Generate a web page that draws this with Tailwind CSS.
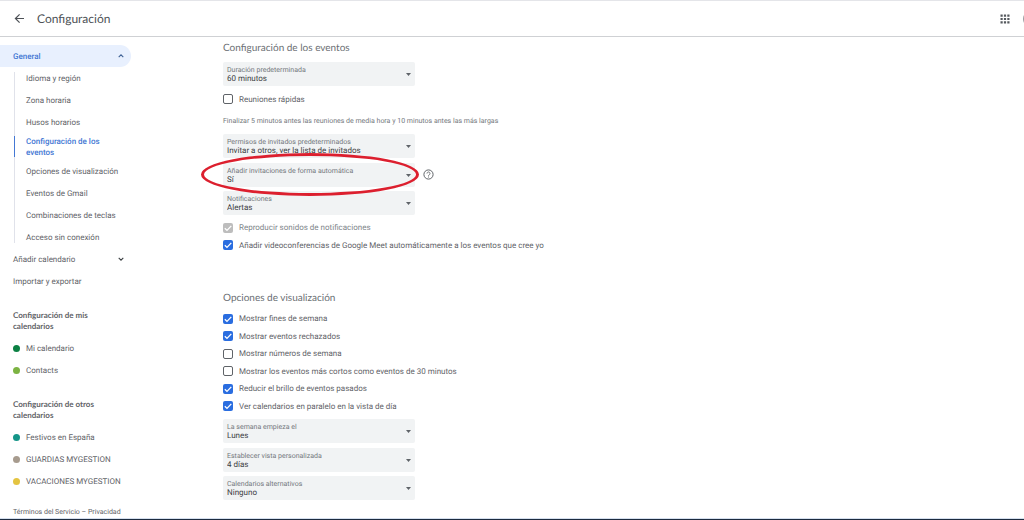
<!DOCTYPE html>
<html lang='es'>

<head>
    <meta charset='UTF-8'>
    <meta name='viewport' content='width=device-width, initial-scale=1.0'>
    <title>Configuración</title>
    <script src="https://cdn.jsdelivr.net/npm/@tailwindcss/browser@4"></script>
</head>

<body class='min-h-screen flex flex-col overflow-x-hidden bg-white font-[Roboto,"Liberation_Sans",sans-serif] text-[8px] leading-[11px] text-[#5f6368] [&_*]:[text-rendering:geometricPrecision]'>

    <header class='flex items-center h-[37px] border-t border-t-[#e4e5e9] border-b border-b-[#cfd1d4] pl-[14px] overflow-hidden'>
        <button aria-label='Atrás' class='mr-3'>
            <svg class='size-[11px]' viewBox='0 0 11 11' fill='none' stroke='#4d5156' stroke-width='1.2'><path d='M10 5.5H1.5M5.6 1.3 1.4 5.5l4.2 4.2' /></svg>
        </button>
        <h1 class='font-[Lato,sans-serif] text-[12px] leading-4 text-[#4d5156]'>Configuración</h1>
        <button aria-label='Aplicaciones' class='ml-auto mr-[13px]'>
            <svg class='size-[10px]' viewBox='0 0 10 10' fill='#55595e'><path d='M.5.5h2.2v2.2H.5zM3.9.5h2.2v2.2H3.9zM7.3.5h2.2v2.2H7.3zM.5 3.9h2.2v2.2H.5zM3.9 3.9h2.2v2.2H3.9zM7.3 3.9h2.2v2.2H7.3zM.5 7.3h2.2v2.2H.5zM3.9 7.3h2.2v2.2H3.9zM7.3 7.3h2.2v2.2H7.3z' /></svg>
        </button>
        <button aria-label='Cuenta' class='size-4 rounded-full bg-[#9a9da1] shrink-0 -mr-[15px]'></button>
    </header>

    <div class='flex flex-1'>

        <!-- sidebar -->
        <nav class='w-[131px] shrink-0 pt-2'>
            <button class='flex items-center justify-between w-full h-[22px] rounded-r-full bg-[#e8f0fe] pl-[13px] pr-[7px] font-medium text-[#4478d4]' aria-expanded='true'>
                General
                <svg class='size-[6px]' viewBox='0 0 6 6' fill='none' stroke='#3f6296' stroke-width='1.1'><path d='M.7 4.2 3 1.9l2.3 2.3' /></svg>
            </button>

            <div class='relative'>
                <div class='absolute left-[14px] top-[5px] bottom-[5px] w-px bg-[#e0e2ea]'></div>
                <a href='#' class='flex items-center h-[22px] pl-[26px]'>Idioma y región</a>
                <a href='#' class='flex items-center h-[22px] pl-[26px]'>Zona horaria</a>
                <a href='#' class='flex items-center h-[22px] pl-[26px]'>Husos horarios</a>
                <a href='#' class='relative flex items-center h-[27px] pl-[26px] pr-6 font-medium text-[#4478d4]'>
                    <span class='absolute left-[14px] inset-y-[3px] w-px bg-[#4478d4]'></span>
                    Configuración de los eventos
                </a>
                <a href='#' class='flex items-center h-[22px] pl-[26px]'>Opciones de visualización</a>
                <a href='#' class='flex items-center h-[22px] pl-[26px]'>Eventos de Gmail</a>
                <a href='#' class='flex items-center h-[22px] pl-[26px]'>Combinaciones de teclas</a>
                <a href='#' class='flex items-center h-[22px] pl-[26px]'>Acceso sin conexión</a>
            </div>

            <button class='flex items-center justify-between w-full h-[22px] pl-[13px] pr-[7px]' aria-expanded='false'>
                Añadir calendario
                <svg class='size-[6px]' viewBox='0 0 6 6' fill='none' stroke='#3c4043' stroke-width='1.1'><path d='M.7 1.9 3 4.2l2.3-2.3' /></svg>
            </button>
            <a href='#' class='flex items-center h-[22px] pl-[13px]'>Importar y exportar</a>

            <h2 class='mt-[18px] mb-[5px] pl-[13px] pr-7 font-[Lato,sans-serif] font-bold text-[#5f6368]'>Configuración de mis calendarios</h2>
            <a href='#' class='flex items-center gap-[6px] h-[22px] pl-[13px]'><span class='size-[7px] rounded-full bg-[#0b8043]'></span>Mi calendario</a>
            <a href='#' class='flex items-center gap-[6px] h-[22px] pl-[13px]'><span class='size-[7px] rounded-full bg-[#7cb342]'></span>Contacts</a>

            <h2 class='mt-[18px] mb-[5px] pl-[13px] pr-7 font-[Lato,sans-serif] font-bold text-[#5f6368]'>Configuración de otros calendarios</h2>
            <a href='#' class='flex items-center gap-[6px] h-[22px] pl-[13px]'><span class='size-[7px] rounded-full bg-[#159588]'></span>Festivos en España</a>
            <a href='#' class='flex items-center gap-[6px] h-[22px] pl-[13px] whitespace-nowrap'><span class='size-[7px] rounded-full bg-[#a79b8e]'></span>GUARDIAS MYGESTION</a>
            <a href='#' class='flex items-center gap-[6px] h-[22px] pl-[13px] whitespace-nowrap'><span class='size-[7px] rounded-full bg-[#e4c441]'></span>VACACIONES MYGESTION</a>

            <p class='mt-[15px] pl-[13px] text-[7px] whitespace-nowrap'><a href='#'>Términos del Servicio</a> – <a href='#'>Privacidad</a></p>
        </nav>

        <!-- settings -->
        <main class='flex-1 pl-[92px] pt-[3px]'>
            <section>
                <h2 class='font-[Lato,sans-serif] text-[10px] leading-4 text-[#6b6f74]'>Configuración de los eventos</h2>

                <div class='relative mt-[6px] w-48 h-6 bg-[#f1f3f4] rounded-xs px-1 pt-1'>
                    <label for='duration' class='block text-[7px] leading-[8px] text-[#74787d]'>Duración predeterminada</label>
                    <select id='duration' class='block appearance-none w-full leading-[9px] text-[#3c4043]'><option>60 minutos</option></select>
                    <svg class='absolute right-1 top-[11px] w-[5px] h-[3px]' viewBox='0 0 5 3' fill='#5f6368'><path d='M0 0h5L2.500 3z' /></svg>
                </div>

                <label class='flex items-center gap-[6px] h-[18px] mt-1'>
                    <span class='grid size-[10px]'>
                        <input type='checkbox' class='appearance-none col-start-1 row-start-1 size-[10px] rounded-xs border border-[#5f6368]'>
                    </span>
                    Reuniones rápidas
                </label>

                <p class='mt-2 text-[7px] text-[#74787d]'>Finalizar 5 minutos antes las reuniones de media hora y 10 minutos antes las más largas</p>

                <div class='flex flex-col justify-between mt-[7px] h-[81px]'>
                    <div class='relative w-48 h-6 bg-[#f1f3f4] rounded-xs px-1 pt-1'>
                        <label for='guests' class='block text-[7px] leading-[8px] text-[#74787d]'>Permisos de invitados predeterminados</label>
                        <select id='guests' class='block appearance-none w-full leading-[9px] text-[#3c4043]'><option>Invitar a otros, ver la lista de invitados</option></select>
                        <svg class='absolute right-1 top-[11px] w-[5px] h-[3px]' viewBox='0 0 5 3' fill='#5f6368'><path d='M0 0h5L2.500 3z' /></svg>
                    </div>
                    <div class='flex items-center gap-2'>
                        <div class='relative w-48 h-6 bg-[#f1f3f4] rounded-xs px-1 pt-1'>
                            <label for='invites' class='block text-[7px] leading-[8px] text-[#74787d]'>Añadir invitaciones de forma automática</label>
                            <select id='invites' class='block appearance-none w-full leading-[9px] text-[#3c4043]'><option>Sí</option></select>
                            <svg class='absolute right-1 top-[11px] w-[5px] h-[3px]' viewBox='0 0 5 3' fill='#5f6368'><path d='M0 0h5L2.500 3z' /></svg>
                            <!-- highlight ring -->
                            <div class='absolute z-10 -left-[22px] -right-1 -top-[10px] -bottom-[9px] border-3 border-[#dc1f2e] rounded-[50%] pointer-events-none'></div>
                        </div>
                        <button aria-label='Ayuda'>
                            <svg class='size-[11px]' viewBox='0 0 11 11' fill='none' stroke='#5f6368'><circle cx='5.500' cy='5.500' r='4.600' /><path d='M4 4.500a1.500 1.500 0 1 1 2.300 1.250c-.6.400-.8.600-.8 1.150M5.500 7.500v1' stroke-width='.9' /></svg>
                        </button>
                    </div>
                    <div class='relative w-48 h-6 bg-[#f1f3f4] rounded-xs px-1 pt-1'>
                        <label for='notifications' class='block text-[7px] leading-[8px] text-[#74787d]'>Notificaciones</label>
                        <select id='notifications' class='block appearance-none w-full leading-[9px] text-[#3c4043]'><option>Alertas</option></select>
                        <svg class='absolute right-1 top-[11px] w-[5px] h-[3px]' viewBox='0 0 5 3' fill='#5f6368'><path d='M0 0h5L2.500 3z' /></svg>
                    </div>
                </div>

                <div class='grid grid-rows-2 h-[35px] mt-1'>
                    <label class='flex items-center gap-[6px] text-[#80868b]'>
                        <span class='grid size-[10px]'>
                            <input type='checkbox' checked disabled class='appearance-none col-start-1 row-start-1 size-[10px] rounded-xs bg-[#bdbdbd]'>
                            <svg class='col-start-1 row-start-1 size-[10px] pointer-events-none' viewBox='0 0 10 10' fill='none' stroke='#fff' stroke-width='1.300'><path d='M1.800 5.200 4 7.400l4.300-4.500' /></svg>
                        </span>
                        Reproducir sonidos de notificaciones
                    </label>
                    <label class='flex items-center gap-[6px]'>
                        <span class='grid size-[10px]'>
                            <input type='checkbox' checked class='appearance-none col-start-1 row-start-1 size-[10px] rounded-xs bg-[#2a6de0]'>
                            <svg class='col-start-1 row-start-1 size-[10px] pointer-events-none' viewBox='0 0 10 10' fill='none' stroke='#fff' stroke-width='1.300'><path d='M1.800 5.200 4 7.400l4.300-4.500' /></svg>
                        </span>
                        Añadir videoconferencias de Google Meet automáticamente a los eventos que cree yo
                    </label>
                </div>
            </section>

            <section class='mt-9'>
                <h2 class='font-[Lato,sans-serif] text-[10px] leading-4 text-[#6b6f74]'>Opciones de visualización</h2>

                <div class='grid grid-rows-6 h-[105px] mt-1'>
                    <label class='flex items-center gap-[6px]'>
                        <span class='grid size-[10px]'>
                            <input type='checkbox' checked class='appearance-none col-start-1 row-start-1 size-[10px] rounded-xs bg-[#2a6de0]'>
                            <svg class='col-start-1 row-start-1 size-[10px] pointer-events-none' viewBox='0 0 10 10' fill='none' stroke='#fff' stroke-width='1.300'><path d='M1.800 5.200 4 7.400l4.300-4.500' /></svg>
                        </span>
                        Mostrar fines de semana
                    </label>
                    <label class='flex items-center gap-[6px]'>
                        <span class='grid size-[10px]'>
                            <input type='checkbox' checked class='appearance-none col-start-1 row-start-1 size-[10px] rounded-xs bg-[#2a6de0]'>
                            <svg class='col-start-1 row-start-1 size-[10px] pointer-events-none' viewBox='0 0 10 10' fill='none' stroke='#fff' stroke-width='1.300'><path d='M1.800 5.200 4 7.400l4.300-4.500' /></svg>
                        </span>
                        Mostrar eventos rechazados
                    </label>
                    <label class='flex items-center gap-[6px]'>
                        <span class='grid size-[10px]'>
                            <input type='checkbox' class='appearance-none col-start-1 row-start-1 size-[10px] rounded-xs border border-[#5f6368]'>
                        </span>
                        Mostrar números de semana
                    </label>
                    <label class='flex items-center gap-[6px]'>
                        <span class='grid size-[10px]'>
                            <input type='checkbox' class='appearance-none col-start-1 row-start-1 size-[10px] rounded-xs border border-[#5f6368]'>
                        </span>
                        Mostrar los eventos más cortos como eventos de 30 minutos
                    </label>
                    <label class='flex items-center gap-[6px]'>
                        <span class='grid size-[10px]'>
                            <input type='checkbox' checked class='appearance-none col-start-1 row-start-1 size-[10px] rounded-xs bg-[#2a6de0]'>
                            <svg class='col-start-1 row-start-1 size-[10px] pointer-events-none' viewBox='0 0 10 10' fill='none' stroke='#fff' stroke-width='1.300'><path d='M1.800 5.200 4 7.400l4.300-4.500' /></svg>
                        </span>
                        Reducir el brillo de eventos pasados
                    </label>
                    <label class='flex items-center gap-[6px]'>
                        <span class='grid size-[10px]'>
                            <input type='checkbox' checked class='appearance-none col-start-1 row-start-1 size-[10px] rounded-xs bg-[#2a6de0]'>
                            <svg class='col-start-1 row-start-1 size-[10px] pointer-events-none' viewBox='0 0 10 10' fill='none' stroke='#fff' stroke-width='1.300'><path d='M1.800 5.200 4 7.400l4.300-4.500' /></svg>
                        </span>
                        Ver calendarios en paralelo en la vista de día
                    </label>
                </div>

                <div class='flex flex-col justify-between mt-1 h-[81px]'>
                    <div class='relative w-48 h-6 bg-[#f1f3f4] rounded-xs px-1 pt-1'>
                        <label for='weekStart' class='block text-[7px] leading-[8px] text-[#74787d]'>La semana empieza el</label>
                        <select id='weekStart' class='block appearance-none w-full leading-[9px] text-[#3c4043]'><option>Lunes</option></select>
                        <svg class='absolute right-1 top-[11px] w-[5px] h-[3px]' viewBox='0 0 5 3' fill='#5f6368'><path d='M0 0h5L2.500 3z' /></svg>
                    </div>
                    <div class='relative w-48 h-6 bg-[#f1f3f4] rounded-xs px-1 pt-1'>
                        <label for='customView' class='block text-[7px] leading-[8px] text-[#74787d]'>Establecer vista personalizada</label>
                        <select id='customView' class='block appearance-none w-full leading-[9px] text-[#3c4043]'><option>4 días</option></select>
                        <svg class='absolute right-1 top-[11px] w-[5px] h-[3px]' viewBox='0 0 5 3' fill='#5f6368'><path d='M0 0h5L2.500 3z' /></svg>
                    </div>
                    <div class='relative w-48 h-6 bg-[#f1f3f4] rounded-xs px-1 pt-1'>
                        <label for='altCalendars' class='block text-[7px] leading-[8px] text-[#74787d]'>Calendarios alternativos</label>
                        <select id='altCalendars' class='block appearance-none w-full leading-[9px] text-[#3c4043]'><option>Ninguno</option></select>
                        <svg class='absolute right-1 top-[11px] w-[5px] h-[3px]' viewBox='0 0 5 3' fill='#5f6368'><path d='M0 0h5L2.500 3z' /></svg>
                    </div>
                </div>
            </section>
        </main>

    </div>

    <div class='h-[2px] bg-[#1d2b3f] border-t border-[#d5dfee]'></div>

</body>

</html>
